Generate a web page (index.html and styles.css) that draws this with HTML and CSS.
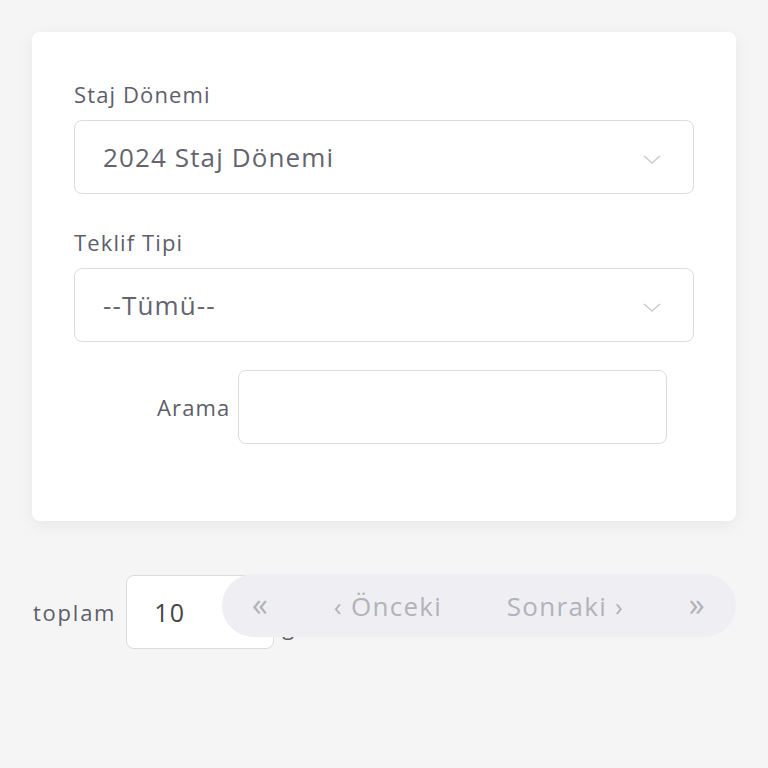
FILE: index.html
```html
<!DOCTYPE html>
<html lang="tr">
<head>
    <meta charset="UTF-8">
    <title>Teklifler</title>
    <link rel="stylesheet" href="styles.css">
</head>
<body>
<div class="card">
    <div class="group">
        <label class="lbl">Staj Dönemi</label>
        <div class="select">
            <span>2024 Staj Dönemi</span>
            <svg class="chev" width="18" height="10" viewBox="0 0 18 10"><path d="M1 1 L9 8 L17 1" fill="none" stroke="#ccc" stroke-width="1.6"/></svg>
        </div>
    </div>
    <div class="group">
        <label class="lbl">Teklif Tipi</label>
        <div class="select">
            <span>--Tümü--</span>
            <svg class="chev" width="18" height="10" viewBox="0 0 18 10"><path d="M1 1 L9 8 L17 1" fill="none" stroke="#ccc" stroke-width="1.6"/></svg>
        </div>
    </div>
    <div class="search">
        <label class="lbl">Arama</label>
        <div class="input"></div>
    </div>
</div>
<div class="footer">
    <span class="lbl total">toplam</span>
    <div class="input small">10</div>
    <span class="lbl show">göster</span>
    <div class="pager">
        <span class="dbl">«</span>
        <span>‹ Önceki</span>
        <span>Sonraki ›</span>
        <span class="dbl">»</span>
    </div>
</div>
</body>
</html>
```
FILE: styles.css
```css
body {
    margin: 0;
    padding: 32px 32px 0 33px;
    background: #f5f5f5;
    font-family: "Open Sans", "Liberation Sans", sans-serif;
    color: #5e5e6a;
    letter-spacing: 0.07em;
}
.card {
    margin-left: -1px;
    background: #fff;
    border-radius: 8px;
    box-shadow: 0 4px 16px rgba(0,0,0,0.06);
    padding: 44px 42px 77px 42px;
}
.lbl {
    font-size: 22px;
    color: #5e5e6a;
}
.group .lbl {
    display: block;
    margin-bottom: 8px;
    line-height: 36px;
}
.group {
    margin-bottom: 30px;
}
.group + .group {
    margin-bottom: 0;
}
.select, .input {
    box-sizing: border-box;
    height: 74px;
    border: 1px solid #dcdcdf;
    border-radius: 8px;
    background: #fff;
}
.select {
    display: flex;
    align-items: center;
    justify-content: space-between;
    padding: 0 32px 0 28px;
    font-size: 26px;
    color: #64646e;
}
.chev {
    margin-top: 6px;
}
.search {
    display: flex;
    align-items: center;
    gap: 8px;
    margin-top: 28px;
    padding-left: 83px;
    padding-right: 27px;
}
.search .input {
    flex: 1;
}
.footer {
    position: relative;
    display: flex;
    align-items: center;
    gap: 8px;
    margin-top: 54px;
}
.total {
    margin-right: 2px;
    letter-spacing: 0.08em;
}
.show {
    margin-top: 28px;
}
.input.small {
    width: 148px;
    display: flex;
    align-items: center;
    padding-left: 27px;
    font-size: 25px;
    color: #444;
}
.pager {
    position: absolute;
    left: 189px;
    right: 0;
    top: -1px;
    height: 63px;
    border-radius: 32px;
    background: #efeff3;
    display: flex;
    align-items: center;
    justify-content: space-between;
    padding: 0 30px 0 30px;
    font-size: 26px;
    color: #b2b2ba;
    letter-spacing: 0.05em;
}
.pager .dbl {
    font-size: 32px;
    margin-top: -4px;
}
```
